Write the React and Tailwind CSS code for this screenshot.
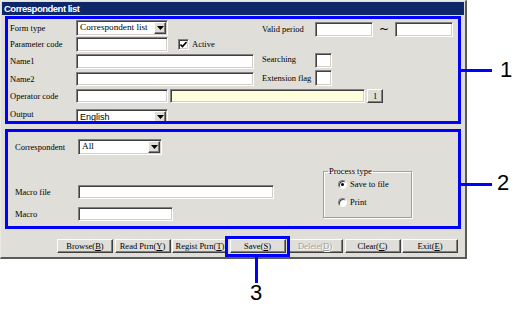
import React from 'react';

const sunken = "bg-white border border-t-[#808080] border-l-[#808080] border-b-white border-r-white shadow-[inset_1px_1px_0_#404040,inset_-1px_-1px_0_#d4d0c8]";
const raised = "bg-[#dfded8] border border-t-white border-l-white border-b-[#404040] border-r-[#404040] shadow-[inset_-1px_-1px_0_#808080]";

const Label = ({ children, w = "w-[66px]" }) => (
  <div className={`${w} shrink-0 text-[8.5px] leading-none text-black`}>{children}</div>
);

const Input = ({ w, h = "h-full", bg = "" }) => (
  <div className={`${sunken} ${w} ${h} shrink-0 ${bg}`} />
);

const Select = ({ w, value, sans }) => (
  <div className={`${sunken} ${w} h-full shrink-0 flex items-center pl-[3px] pr-[1px] py-[1px]`}>
    <span className={`flex-1 leading-none ${sans ? "font-['Liberation_Sans'] text-[9px]" : "text-[9.2px]"}`}>{value}</span>
    <div className={`${raised} w-[12px] h-full flex items-center justify-center`}>
      <svg width="7" height="4" viewBox="0 0 7 4"><polygon points="0,0 7,0 3.5,4" fill="#000" /></svg>
    </div>
  </div>
);

const Btn = ({ text, u, disabled }) => (
  <div className={`${raised} w-[56px] h-[14px] flex items-center justify-center text-[8.5px] leading-none ${disabled ? "text-[#a0a0a0] [text-shadow:1px_1px_0_#fff]" : "text-black"}`}>
    {text}(<span className="underline">{u}</span>)
  </div>
);

const Radio = ({ checked, label }) => (
  <div className="flex items-center h-[12px] pl-[14px]">
    <div className="w-[9px] h-[9px] rounded-full bg-white border border-t-[#808080] border-l-[#808080] border-b-white border-r-white shadow-[inset_1px_1px_0_#404040] flex items-center justify-center">
      {checked && <div className="w-[3px] h-[3px] rounded-full bg-black" />}
    </div>
    <span className="ml-[3px] text-[8.5px] leading-none">{label}</span>
  </div>
);

export default function App() {
  return (
    <div className="relative w-[522px] h-[312px] bg-white overflow-hidden font-['Liberation_Serif',serif]">
      <div className="w-[467px] h-[259px] bg-[#dfded8] border-t border-l border-t-[#e8e8e4] border-l-[#e8e8e4] border-r-2 border-b-2 border-r-[#5a5a5a] border-b-[#5a5a5a]">
        <div className="mx-[1px] mt-[1px] h-[13px] bg-[#0d2769] flex items-center pl-[2px]">
          <span className="font-['Liberation_Sans',sans-serif] font-bold text-[9.5px] tracking-[-0.5px] text-white leading-none">Correspondent list</span>
        </div>

        {/* section 1 */}
        <div className="ml-[4px] mt-[1px] w-[456px] h-[108px] border-[3px] border-[#0000ff] overflow-hidden">
          <div className="flex h-[67px]">
            <div className="w-[254px] pl-[2px] flex flex-col">
              <div className="mt-[1px] h-[16px] flex items-center">
                <Label>Form type</Label>
                <Select w="w-[92px]" value="Correspondent list" />
              </div>
              <div className="mt-[1px] h-[15px] flex items-center">
                <Label>Parameter code</Label>
                <Input w="w-[92px]" />
                <div className={`${sunken} ml-[10px] w-[11px] h-[11px] flex items-center justify-center`}>
                  <svg width="7" height="7" viewBox="0 0 7 7"><polyline points="0.5,3.5 2.5,5.5 6.5,1" fill="none" stroke="#000" strokeWidth="1.6" /></svg>
                </div>
                <span className="ml-[3px] text-[8.5px] leading-none">Active</span>
              </div>
              <div className="mt-[2px] h-[15px] flex items-center">
                <Label>Name1</Label>
                <Input w="w-[178px]" />
              </div>
              <div className="mt-[3px] h-[14px] flex items-center">
                <Label>Name2</Label>
                <Input w="w-[178px]" />
              </div>
            </div>
            <div className="flex-1 flex flex-col">
              <div className="mt-[3px] h-[15px] flex items-center">
                <Label w="w-[53px]">Valid period</Label>
                <Input w="w-[58px]" />
                <span className="w-[22px] text-center font-['DejaVu_Sans',sans-serif] text-[12px] leading-none">~</span>
                <Input w="w-[58px]" />
              </div>
              <div className="mt-[16px] h-[16px] flex items-start">
                <Label w="w-[53px] mt-[2px]">Searching</Label>
                <Input w="w-[17px]" />
              </div>
              <div className="mt-[2px] h-[16px] flex items-center">
                <Label w="w-[53px]">Extension flag</Label>
                <Input w="w-[17px]" />
              </div>
            </div>
          </div>
          <div className="pl-[2px] mt-[3px] h-[14px] flex items-center">
            <Label>Operator code</Label>
            <Input w="w-[92px]" />
            <Input w="w-[195px] ml-[2px]" bg="!bg-[#ffffdc]" />
            <div className={`${raised} ml-[2px] w-[16px] h-full flex items-center justify-center text-[8.5px] leading-none`}>1</div>
          </div>
          <div className="pl-[2px] mt-[6px] h-[16px] flex items-start">
            <Label w="w-[66px] mt-[1px]">Output</Label>
            <Select w="w-[92px]" value="English" sans />
          </div>
        </div>

        {/* section 2 */}
        <div className="ml-[4px] mt-[5px] w-[456px] h-[100px] border-[3px] border-[#0000ff] flex">
          <div className="w-[315px] pl-[7px] flex flex-col">
            <div className="mt-[7px] h-[16px] flex items-center">
              <Label w="w-[63px]">Correspondent</Label>
              <Select w="w-[84px]" value="All" />
            </div>
            <div className="mt-[30px] h-[14px] flex items-center">
              <Label w="w-[63px]">Macro file</Label>
              <Input w="w-[196px]" />
            </div>
            <div className="mt-[8px] h-[14px] flex items-center">
              <Label w="w-[63px]">Macro</Label>
              <Input w="w-[95px]" />
            </div>
          </div>
          <fieldset className="mt-[35px] w-[89px] h-[51px] border border-[#a0a0a0] shadow-[1px_1px_0_#fff,inset_1px_1px_0_#fff]">
            <legend className="ml-[4px] px-[1px] text-[8.5px] leading-none">Process type</legend>
            <div className="mt-[3px]"><Radio checked label="Save to file" /></div>
            <div className="mt-[6px]"><Radio label="Print" /></div>
          </fieldset>
        </div>

        {/* buttons */}
        <div className="ml-[56px] mt-[10px] flex gap-[1.5px]">
          <Btn text="Browse" u="B" />
          <Btn text="Read Ptrn" u="Y" />
          <Btn text="Regist Ptrn" u="T" />
          <Btn text="Save" u="S" />
          <Btn text="Delete" u="D" disabled />
          <Btn text="Clear" u="C" />
          <Btn text="Exit" u="E" />
        </div>
      </div>

      {/* callouts */}
      <div className="absolute left-[461px] top-[69px] w-[31px] h-[3px] bg-[#0000ff]" />
      <div className="absolute left-[500px] top-[59px] font-['Liberation_Sans',sans-serif] text-[22px] leading-none">1</div>
      <div className="absolute left-[461px] top-[183px] w-[31px] h-[3px] bg-[#0000ff]" />
      <div className="absolute left-[497px] top-[172px] font-['Liberation_Sans',sans-serif] text-[22px] leading-none">2</div>
      <div className="absolute left-[225px] top-[236px] w-[65px] h-[21px] border-[3px] border-[#0000ff]" />
      <div className="absolute left-[255px] top-[257px] w-[3px] h-[26px] bg-[#0000ff]" />
      <div className="absolute left-[250px] top-[282px] font-['Liberation_Sans',sans-serif] text-[22px] leading-none">3</div>
    </div>
  );
}
